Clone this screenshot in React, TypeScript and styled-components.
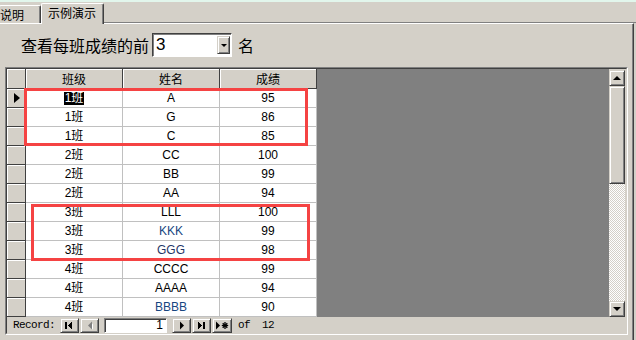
import React from "react";
import styled, { createGlobalStyle } from "styled-components";

const rows = [
  { cls: "1班", name: "A", score: "95" },
  { cls: "1班", name: "G", score: "86" },
  { cls: "1班", name: "C", score: "85" },
  { cls: "2班", name: "CC", score: "100" },
  { cls: "2班", name: "BB", score: "99" },
  { cls: "2班", name: "AA", score: "94" },
  { cls: "3班", name: "LLL", score: "100" },
  { cls: "3班", name: "KKK", score: "99", tint: "#17467f" },
  { cls: "3班", name: "GGG", score: "98", tint: "#1f3668" },
  { cls: "4班", name: "CCCC", score: "99" },
  { cls: "4班", name: "AAAA", score: "94" },
  { cls: "4班", name: "BBBB", score: "90", tint: "#17467f" },
];

const GlobalStyle = createGlobalStyle`
  html, body { margin: 0; padding: 0; }
  body {
    background: #d4d0c8;
    font-family: "Liberation Sans", "Noto Sans CJK SC", sans-serif;
    font-size: 12px;
    color: #000;
  }
  * { box-sizing: border-box; }
`;

const Window = styled.div`
  width: 636px;
  height: 340px;
  overflow: hidden;
  background: #d4d0c8;
  display: flex;
  flex-direction: column;
`;

const TopStripe = styled.div`
  height: 2px;
  flex: none;
  background: #e2f6ec;
`;

const TabStrip = styled.div`
  height: 21px;
  flex: none;
  display: flex;
  align-items: flex-end;
`;

const Tab = styled.div<{ $active?: boolean; $w: number; $pad: number }>`
  position: relative;
  z-index: ${(p) => (p.$active ? 1 : 0)};
  width: ${(p) => p.$w}px;
  height: ${(p) => (p.$active ? 21 : 18)}px;
  margin-bottom: ${(p) => (p.$active ? -1 : 0)}px;
  margin-left: ${(p) => (p.$active ? 0 : -1)}px;
  padding-left: ${(p) => p.$pad}px;
  padding-bottom: ${(p) => (p.$active ? 2 : 0)}px;
  display: flex;
  align-items: center;
  background: #d4d0c8;
  border-top: 1px solid #fff;
  border-left: 1px solid #fff;
  border-right: 1px solid #404040;
  box-shadow: inset -1px 0 #808080;
  border-top-left-radius: 2px;
  border-top-right-radius: 2px;
  font-family: "Noto Sans CJK SC", sans-serif;
  font-size: 12px;
  line-height: 14px;
`;

const TabFiller = styled.div`
  flex: 1;
  align-self: stretch;
  border-bottom: 1px solid #808080;
`;

const Panel = styled.div`
  flex: 1;
  width: 634px;
  border-top: 1px solid #fff;
  border-right: 1px solid #404040;
  box-shadow: inset -1px 0 #808080;
  display: flex;
  flex-direction: column;
`;

const FilterRow = styled.div`
  margin-top: 9px;
  height: 24px;
  padding-left: 21px;
  display: flex;
  align-items: center;
  font-family: "Noto Sans CJK SC", sans-serif;
  font-size: 16px;
  line-height: 24px;
`;

const Combo = styled.div`
  margin-left: 3px;
  width: 80px;
  height: 24px;
  background: #fff;
  border: 1px solid;
  border-color: #404040 #fff #fff #404040;
  box-shadow: inset 1px 1px #808080;
  display: flex;
  align-items: center;
  padding: 1px 1px 1px 3px;
`;

const ComboValue = styled.span`
  flex: 1;
  font-family: "Liberation Sans", sans-serif;
  font-size: 17px;
  line-height: 20px;
`;

const RaisedButton = styled.div<{ $w: number; $h: number }>`
  width: ${(p) => p.$w}px;
  height: ${(p) => p.$h}px;
  flex: none;
  background: #d4d0c8;
  border: 1px solid;
  border-color: #d4d0c8 #404040 #404040 #d4d0c8;
  box-shadow: inset 1px 1px #fff, inset -1px -1px #808080;
  display: flex;
  align-items: center;
  justify-content: center;
`;

const DownTriangle = styled.span`
  width: 0;
  height: 0;
  border-left: 3px solid transparent;
  border-right: 3px solid transparent;
  border-top: 3px solid #000;
`;

const UpArrow = styled.span`
  width: 0;
  height: 0;
  border-left: 4px solid transparent;
  border-right: 4px solid transparent;
  border-bottom: 4px solid #000;
  margin-bottom: 1px;
`;

const DownArrow = styled.span`
  width: 0;
  height: 0;
  border-left: 4px solid transparent;
  border-right: 4px solid transparent;
  border-top: 4px solid #000;
`;

const Suffix = styled.span`
  margin-left: 6px;
`;

const SheetOuter = styled.div`
  margin: 10px 0 0 5px;
  width: 623px;
  height: 268px;
  border: 1px solid;
  border-color: #808080 #fff #fff #808080;
`;

const SheetInner = styled.div`
  width: 100%;
  height: 100%;
  border: 1px solid;
  border-color: #404040 #d4d0c8 #d4d0c8 #404040;
  display: flex;
  flex-direction: column;
`;

const SheetBody = styled.div`
  height: 248px;
  display: flex;
  background: #808080;
`;

const Table = styled.div`
  position: relative;
  width: 310px;
  display: flex;
  flex-direction: column;
`;

const Row = styled.div<{ $h: number }>`
  height: ${(p) => p.$h}px;
  display: flex;
`;

const SelectorCell = styled.div`
  width: 19px;
  height: 100%;
  background: #d4d0c8;
  border-right: 1px solid #404040;
  border-bottom: 1px solid #404040;
  box-shadow: inset 1px 1px #fff;
  display: flex;
  align-items: center;
  justify-content: center;
`;

const CurrentMark = styled.span`
  width: 0;
  height: 0;
  border-top: 5px solid transparent;
  border-bottom: 5px solid transparent;
  border-left: 6px solid #000;
  margin-left: 1px;
`;

const HeaderCell = styled.div`
  width: 97px;
  height: 100%;
  background: #d4d0c8;
  border-right: 1px solid #404040;
  border-bottom: 1px solid #404040;
  box-shadow: inset 1px 1px #fff;
  display: flex;
  align-items: center;
  justify-content: center;
  font-family: "Noto Sans CJK SC", sans-serif;
  font-size: 12px;
  line-height: 14px;
`;

const DataCell = styled.div<{ $tint?: string }>`
  width: 97px;
  height: 100%;
  background: #fff;
  border-right: 1px solid #c0c0c0;
  border-bottom: 1px solid #c0c0c0;
  display: flex;
  align-items: center;
  justify-content: center;
  color: ${(p) => p.$tint || "#000"};
  line-height: 14px;
`;

const Selected = styled.span`
  background: #000;
  color: #fff;
  padding: 0 1px;
  line-height: 13px;
`;

const Highlight = styled.div<{ $l: number; $t: number; $w: number; $h: number }>`
  position: absolute;
  left: ${(p) => p.$l}px;
  top: ${(p) => p.$t}px;
  width: ${(p) => p.$w}px;
  height: ${(p) => p.$h}px;
  border: 3px solid #f54343;
  pointer-events: none;
`;

const Filler = styled.div`
  flex: 1;
`;

const ScrollColumn = styled.div`
  width: 17px;
  padding: 1px 1px 0 0;
  background: #d4d0c8;
  display: flex;
  flex-direction: column;
`;

const ScrollTrack = styled.div`
  flex: 1;
  background-color: #fff;
  background-image: repeating-conic-gradient(#d4d0c8 0 25%, #fff 0 50%);
  background-size: 2px 2px;
`;

const NavBar = styled.div`
  flex: 1;
  display: flex;
  align-items: center;
  padding-left: 6px;
  background: #d4d0c8;
  font-family: "Liberation Mono", monospace;
  font-size: 11px;
  letter-spacing: -0.6px;
`;

const NavLabel = styled.span<{ $ml?: number }>`
  margin-left: ${(p) => p.$ml || 0}px;
  white-space: pre;
`;

const NavGroup = styled.div<{ $ml: number }>`
  margin-left: ${(p) => p.$ml}px;
  display: flex;
  gap: 1px;
`;

const RecordField = styled.div`
  margin-left: 5px;
  width: 63px;
  height: 15px;
  background: #fff;
  border: 1px solid;
  border-color: #808080 #fff #fff #808080;
  box-shadow: inset 1px 1px #404040;
  display: flex;
  align-items: center;
  justify-content: flex-end;
  padding-right: 3px;
  font-family: "Liberation Sans", sans-serif;
  font-size: 12px;
  letter-spacing: 0;
  line-height: 13px;
`;

const FirstIcon = () => (
  <svg width="17" height="13" viewBox="0 0 17 13" shapeRendering="crispEdges">
    <rect x="4" y="3" width="2" height="7" fill="#000" />
    <polygon points="11,2.5 7,6.5 11,10.5" fill="#000" />
  </svg>
);

const PrevIcon = () => (
  <svg width="17" height="13" viewBox="0 0 17 13">
    <polygon points="11,3.5 8,6.5 11,9.5" fill="#fff" transform="translate(1 1)" />
    <polygon points="11,2.5 7,6.5 11,10.5" fill="#808080" />
  </svg>
);

const NextIcon = () => (
  <svg width="17" height="13" viewBox="0 0 17 13">
    <polygon points="7,2.5 11,6.5 7,10.5" fill="#000" />
  </svg>
);

const LastIcon = () => (
  <svg width="17" height="13" viewBox="0 0 17 13" shapeRendering="crispEdges">
    <polygon points="5,2.5 9,6.5 5,10.5" fill="#000" />
    <rect x="10" y="3" width="2" height="7" fill="#000" />
  </svg>
);

const NewIcon = () => (
  <svg width="18" height="13" viewBox="0 0 18 13">
    <polygon points="3,2.5 7,6.5 3,10.5" fill="#000" />
    <g stroke="#000" strokeWidth="1.3">
      <line x1="12" y1="3" x2="12" y2="10" />
      <line x1="8.8" y1="6.5" x2="15.2" y2="6.5" />
      <line x1="9.7" y1="4.2" x2="14.3" y2="8.8" />
      <line x1="14.3" y1="4.2" x2="9.7" y2="8.8" />
    </g>
  </svg>
);

export default function App() {
  return (
    <>
      <GlobalStyle />
      <Window>
        <TopStripe />
        <TabStrip>
          <Tab $w={42} $pad={0}>说明</Tab>
          <Tab $active $w={63} $pad={6}>示例演示</Tab>
          <TabFiller />
        </TabStrip>
        <Panel>
          <FilterRow>
            查看每班成绩的前
            <Combo>
              <ComboValue>3</ComboValue>
              <RaisedButton $w={13} $h={18}>
                <DownTriangle />
              </RaisedButton>
            </Combo>
            <Suffix>名</Suffix>
          </FilterRow>
          <SheetOuter>
            <SheetInner>
              <SheetBody>
                <Table>
                  <Row $h={20}>
                    <SelectorCell />
                    <HeaderCell>班级</HeaderCell>
                    <HeaderCell>姓名</HeaderCell>
                    <HeaderCell>成绩</HeaderCell>
                  </Row>
                  {rows.map((r, i) => (
                    <Row $h={19} key={i}>
                      <SelectorCell>{i === 0 && <CurrentMark />}</SelectorCell>
                      <DataCell>{i === 0 ? <Selected>{r.cls}</Selected> : r.cls}</DataCell>
                      <DataCell $tint={r.tint}>{r.name}</DataCell>
                      <DataCell>{r.score}</DataCell>
                    </Row>
                  ))}
                  <Highlight $l={17} $t={19} $w={284} $h={58} />
                  <Highlight $l={24} $t={135} $w={279} $h={57} />
                </Table>
                <Filler />
                <ScrollColumn>
                  <RaisedButton $w={16} $h={16}>
                    <UpArrow />
                  </RaisedButton>
                  <RaisedButton $w={16} $h={98} />
                  <ScrollTrack />
                  <RaisedButton $w={16} $h={16}>
                    <DownArrow />
                  </RaisedButton>
                </ScrollColumn>
              </SheetBody>
              <NavBar>
                <NavLabel>Record:</NavLabel>
                <NavGroup $ml={5}>
                  <RaisedButton $w={19} $h={15}>
                    <FirstIcon />
                  </RaisedButton>
                  <RaisedButton $w={19} $h={15}>
                    <PrevIcon />
                  </RaisedButton>
                </NavGroup>
                <RecordField>1</RecordField>
                <NavGroup $ml={5}>
                  <RaisedButton $w={19} $h={15}>
                    <NextIcon />
                  </RaisedButton>
                  <RaisedButton $w={19} $h={15}>
                    <LastIcon />
                  </RaisedButton>
                  <RaisedButton $w={20} $h={15}>
                    <NewIcon />
                  </RaisedButton>
                </NavGroup>
                <NavLabel $ml={6}>of  12</NavLabel>
              </NavBar>
            </SheetInner>
          </SheetOuter>
        </Panel>
      </Window>
    </>
  );
}
